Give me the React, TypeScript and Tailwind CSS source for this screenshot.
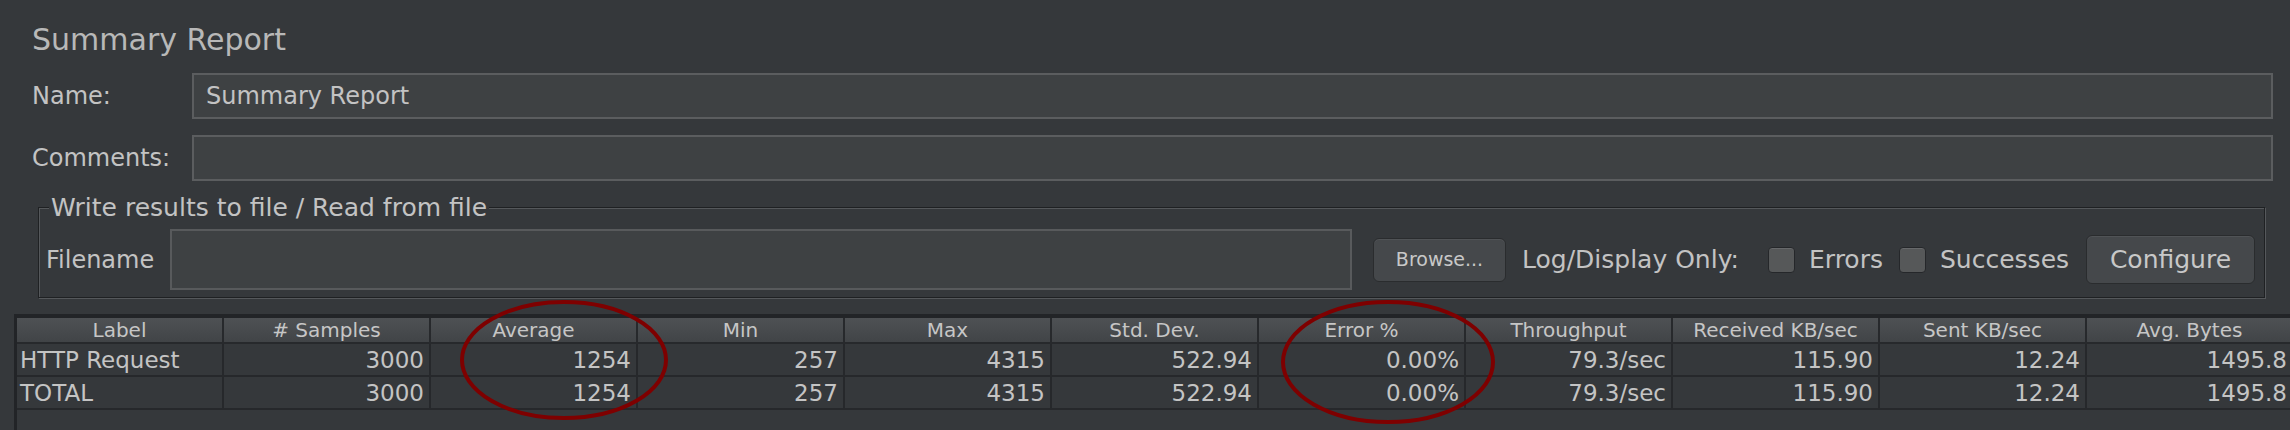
import React from 'react'

const columns = [
  'Label',
  '# Samples',
  'Average',
  'Min',
  'Max',
  'Std. Dev.',
  'Error %',
  'Throughput',
  'Received KB/sec',
  'Sent KB/sec',
  'Avg. Bytes'
]

const values = ['3000', '1254', '257', '4315', '522.94', '0.00%', '79.3/sec', '115.90', '12.24', '1495.8']

const rows = [
  ['HTTP Request', ...values],
  ['TOTAL', ...values]
]

const Checkbox: React.FC = () => (
  <span className="block h-[26px] w-[27px] rounded-[4px] border border-[#25272a] bg-[#565859] shadow-[inset_0_1px_0_#67696b]" />
)

const SummaryTable: React.FC = () => (
  <div className="ml-[14px] mt-[16px] h-[200px] border-l-[3px] border-t-[4px] border-[#222427]">
    <div className="grid grid-cols-[repeat(11,207px)]">
      {columns.map((col) => (
        <div
          key={col}
          className="flex h-[26px] items-center justify-center border-r-2 border-b-2 border-[#27292c] bg-gradient-to-b from-[#4e5154] to-[#414447] text-[20px] leading-none text-[#c6c6c6]"
        >
          {col}
        </div>
      ))}
      {rows.map((row, r) =>
        row.map((cell, c) => (
          <div
            key={`${r}-${c}`}
            className={`flex h-[33px] items-center border-r-2 border-b-2 border-[#26282b] pt-[2px] text-[23px] leading-none text-[#c4c4c4] ${
              c === 0 ? 'justify-start pl-[3px]' : 'justify-end pr-[5px]'
            }`}
          >
            {cell}
          </div>
        ))
      )}
    </div>
  </div>
)

export default function App() {
  return (
    <div className="relative h-[430px] w-[2290px] overflow-hidden bg-[#35383b] font-['DejaVu_Sans',sans-serif] text-[#c3c3c3]">
      <h1 className="pl-[32px] pt-[24px] text-[30px] leading-[31px] text-[#b8b8b8]">Summary Report</h1>

      <div className="mt-[18px] flex h-[46px] items-center pl-[32px] pr-[17px]">
        <span className="w-[160px] text-[24px] leading-none">Name:</span>
        <div className="flex h-full flex-1 items-center border-2 border-[#5b5d5f] bg-[#3e4143] pl-[12px] text-[24px] leading-none">
          Summary Report
        </div>
      </div>

      <div className="mt-[16px] flex h-[46px] items-center pl-[32px] pr-[17px]">
        <span className="w-[160px] text-[24px] leading-none">Comments:</span>
        <div className="h-full flex-1 border-2 border-[#5b5d5f] bg-[#3e4143]" />
      </div>

      {/* etched group box: dark line with a light line one pixel in */}
      <fieldset className="ml-[38px] mr-[25px] mt-[14px] border border-[#1f2123] shadow-[1px_1px_0_#55585b,inset_1px_1px_0_#55585b]">
        <legend className="ml-[10px] bg-[#35383b] px-[2px] text-[25px] leading-[25px] text-[#c3c3c3]">
          Write results to file / Read from file
        </legend>
        <div className="flex items-center pb-[7px] pt-[9px]">
          <span className="w-[131px] pl-[7px] text-[24px] leading-none">Filename</span>
          <div className="h-[61px] w-[1182px] border-2 border-[#585a5c] bg-[#3e4143]" />
          <button className="ml-[21px] flex h-[44px] w-[133px] items-center justify-center rounded-[6px] border border-[#2a2c2e] bg-[#45484b] text-[19px] leading-none text-[#c8c8c8] shadow-[inset_0_1px_0_#505356]">
            Browse...
          </button>
          <span className="ml-[16px] w-[229px] whitespace-nowrap text-[25px] leading-none">Log/Display Only:</span>
          <span className="ml-[17px]">
            <Checkbox />
          </span>
          <span className="ml-[14px] w-[75px] text-[25px] leading-none">Errors</span>
          <span className="ml-[15px]">
            <Checkbox />
          </span>
          <span className="ml-[14px] w-[131px] text-[25px] leading-none">Successes</span>
          <button className="ml-[15px] flex h-[49px] w-[169px] items-center justify-center rounded-[6px] border border-[#2a2c2e] bg-[#45484b] text-[25px] leading-none text-[#c8c8c8] shadow-[inset_0_1px_0_#505356]">
            Configure
          </button>
        </div>
      </fieldset>

      <SummaryTable />

      {/* hand-drawn highlight rings */}
      <svg className="pointer-events-none absolute left-0 top-0" width="2290" height="430">
        <ellipse cx="564" cy="360" rx="102" ry="58" fill="none" stroke="#7e0000" strokeWidth="4" />
        <ellipse cx="1388" cy="362" rx="105" ry="60" fill="none" stroke="#7e0000" strokeWidth="4" />
      </svg>
    </div>
  )
}
